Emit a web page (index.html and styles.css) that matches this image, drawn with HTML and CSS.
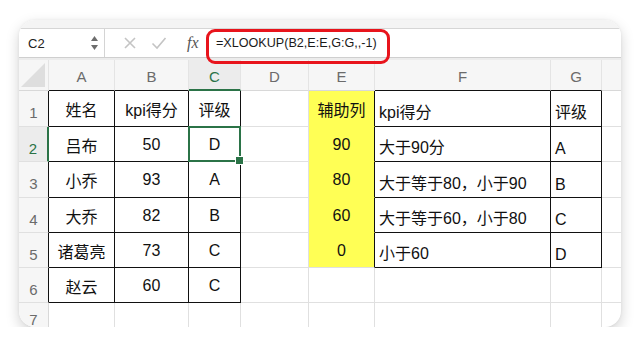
FILE: index.html
```html
<!DOCTYPE html>
<html lang="zh-CN">
<head>
    <meta charset="UTF-8">
    <meta name="viewport" content="width=device-width, initial-scale=1.0">
    <title>XLOOKUP</title>
    <link rel="stylesheet" href="styles.css">
</head>
<body>
    <div class="window">
        <div class="top-strip"></div>
        <div class="formula-bar">
            <div class="name-box">
                <span>C2</span>
                <svg class="spin" width="9" height="16" viewBox="0 0 9 16">
                    <path d="M4.5 1 L8 6 L1 6 Z" fill="#6d6d6d"/>
                    <path d="M4.5 15 L8 10 L1 10 Z" fill="#6d6d6d"/>
                </svg>
            </div>
            <div class="fx-tools">
                <svg width="14" height="14" viewBox="0 0 14 14">
                    <path d="M2 2 L12 12 M12 2 L2 12" stroke="#c4c4c4" stroke-width="1.6" fill="none"/>
                </svg>
                <svg width="16" height="14" viewBox="0 0 16 14">
                    <path d="M1.5 7.5 L6 12 L14.5 2" stroke="#c4c4c4" stroke-width="1.6" fill="none"/>
                </svg>
                <span class="fx">fx</span>
            </div>
            <div class="formula">=XLOOKUP(B2,E:E,G:G,,-1)</div>
        </div>
        <div class="bar-gap"></div>

        <div class="sheet">
            <!-- column headers -->
            <div class="hd corner">
                <svg width="26" height="26" viewBox="0 0 26 26">
                    <path d="M25 1 L25 25 L1 25 Z" fill="#dedede"/>
                </svg>
            </div>
            <div class="hd bt">A</div>
            <div class="hd bt">B</div>
            <div class="hd bt sel-col">C</div>
            <div class="hd">D</div>
            <div class="hd">E</div>
            <div class="hd bt">F</div>
            <div class="hd bt">G</div>
            <div class="hd last"></div>

            <!-- row 1 -->
            <div class="rh br">1</div>
            <div class="c bx ctr">姓名</div>
            <div class="c bx ctr">kpi得分</div>
            <div class="c bx ctr">评级</div>
            <div class="c"></div>
            <div class="c yl ctr">辅助列</div>
            <div class="c bx lt">kpi得分</div>
            <div class="c bx lt">评级</div>
            <div class="c last"></div>

            <!-- row 2 -->
            <div class="rh sel-row">2</div>
            <div class="c bx ctr">吕布</div>
            <div class="c bx ctr">50</div>
            <div class="c bx ctr active">D<span class="sel"></span></div>
            <div class="c"></div>
            <div class="c yl ctr">90</div>
            <div class="c bx lt">大于90分</div>
            <div class="c bx lt">A</div>
            <div class="c last"></div>

            <!-- row 3 -->
            <div class="rh br">3</div>
            <div class="c bx ctr">小乔</div>
            <div class="c bx ctr">93</div>
            <div class="c bx ctr">A</div>
            <div class="c"></div>
            <div class="c yl ctr">80</div>
            <div class="c bx lt">大于等于80，小于90</div>
            <div class="c bx lt">B</div>
            <div class="c last"></div>

            <!-- row 4 -->
            <div class="rh br">4</div>
            <div class="c bx ctr">大乔</div>
            <div class="c bx ctr">82</div>
            <div class="c bx ctr">B</div>
            <div class="c"></div>
            <div class="c yl ctr">60</div>
            <div class="c bx lt">大于等于60，小于80</div>
            <div class="c bx lt">C</div>
            <div class="c last"></div>

            <!-- row 5 -->
            <div class="rh br">5</div>
            <div class="c bx ctr">诸葛亮</div>
            <div class="c bx ctr">73</div>
            <div class="c bx ctr">C</div>
            <div class="c"></div>
            <div class="c yl yl-end ctr">0</div>
            <div class="c bx lt">小于60</div>
            <div class="c bx lt">D</div>
            <div class="c last"></div>

            <!-- row 6 -->
            <div class="rh br">6</div>
            <div class="c bx ctr">赵云</div>
            <div class="c bx ctr">60</div>
            <div class="c bx ctr">C</div>
            <div class="c"></div>
            <div class="c"></div>
            <div class="c"></div>
            <div class="c"></div>
            <div class="c last"></div>

            <!-- row 7 -->
            <div class="rh">7</div>
            <div class="c"></div>
            <div class="c"></div>
            <div class="c"></div>
            <div class="c"></div>
            <div class="c"></div>
            <div class="c"></div>
            <div class="c"></div>
            <div class="c last"></div>
        </div>

        <div class="callout"></div>
    </div>
</body>
</html>
```

FILE: styles.css
```css
* {
    margin: 0;
    padding: 0;
    box-sizing: border-box;
}

body {
    background: #fff;
    font-family: "Liberation Sans", "Noto Sans CJK SC", sans-serif;
    color: #111;
}

.window {
    position: relative;
    width: 602px;
    height: 307px;
    margin: 20px 0 0 19px;
    background: #fff;
    border-radius: 16px;
    overflow: hidden;
    box-shadow: 0 5px 14px rgba(0, 0, 0, 0.18), 0 0 3px rgba(0, 0, 0, 0.06);
}

.top-strip {
    height: 9px;
    background: #f4f4f4;
    border-bottom: 1px solid #d6d6d6;
}

.formula-bar {
    display: flex;
    align-items: center;
    height: 29px;
    background: #fff;
    border-bottom: 1px solid #cfcfcf;
}

.name-box {
    display: flex;
    align-items: center;
    justify-content: space-between;
    width: 86px;
    height: 100%;
    padding: 0 5px 0 9px;
    border-right: 1px solid #d4d4d4;
    font-size: 13px;
    color: #222;
}

.fx-tools {
    display: flex;
    align-items: center;
    gap: 14px;
    padding-left: 18px;
    width: 111px;
}

.fx {
    font-family: "Liberation Serif", serif;
    font-style: italic;
    font-size: 16px;
    color: #555;
    margin-left: 6px;
}

.formula {
    font-size: 12.6px;
    color: #1a1a1a;
}

.bar-gap {
    height: 2px;
    background: #ececec;
}

.sheet {
    display: grid;
    grid-template-columns: 30px 66px 74px 52px 68px 66px 176px 51px 1fr;
    grid-template-rows: 31px 36px 35px 36px 35px 35px 35px 1fr;
    height: 267px;
    font-size: 16px;
}

.hd,
.rh,
.c {
    display: flex;
    align-items: center;
    border-right: 1px solid #e0e0e0;
    border-bottom: 1px solid #e0e0e0;
    white-space: nowrap;
}

.hd {
    justify-content: center;
    padding-top: 3px;
    background: #f6f6f6;
    color: #6b6b6b;
    font-size: 15px;
    border-bottom-color: #d8d8d8;
    border-right-color: #e4e4e4;
}

.corner {
    padding: 0;
    align-items: flex-end;
    justify-content: flex-end;
}

.corner svg {
    margin: 0 2px 2px 0;
}

.rh {
    justify-content: center;
    padding-top: 8px;
    background: #f6f6f6;
    color: #6b6b6b;
    font-size: 15px;
    border-right-color: #d8d8d8;
}

.hd.last,
.c.last {
    border-right: none;
}

.hd.bt {
    border-bottom-color: #111;
}

.sel-col {
    color: #2b7347;
    background: #ececec;
}

.hd.sel-col {
    border-bottom: 2px solid #2b7347;
}

.rh.br {
    border-right-color: #111;
}

.rh.sel-row {
    color: #2b7347;
    background: #ececec;
    border-right: 2px solid #2b7347;
}

.c.bx {
    border-right-color: #111;
    border-bottom-color: #111;
}

.c.yl {
    background: #ffff55;
    border-right-color: #111;
    border-bottom-color: #ffff55;
}

.c.yl.yl-end {
    border-bottom-color: #e0e0e0;
}

.ctr {
    justify-content: center;
    padding-top: 1px;
}

.lt {
    justify-content: flex-start;
    align-items: flex-end;
    padding: 0 0 3px 4px;
}

.active {
    position: relative;
}

.sel {
    position: absolute;
    top: -1px;
    left: -1px;
    right: -1px;
    bottom: -1px;
    border: 2px solid #2b7347;
}

.sel::after {
    content: "";
    position: absolute;
    right: -5px;
    bottom: -5px;
    width: 7px;
    height: 7px;
    background: #2b7347;
    border: 1px solid #fff;
}

.callout {
    position: absolute;
    left: 187px;
    top: 9px;
    width: 184px;
    height: 35px;
    border: 3px solid #e8141c;
    border-radius: 9px;
}
```
